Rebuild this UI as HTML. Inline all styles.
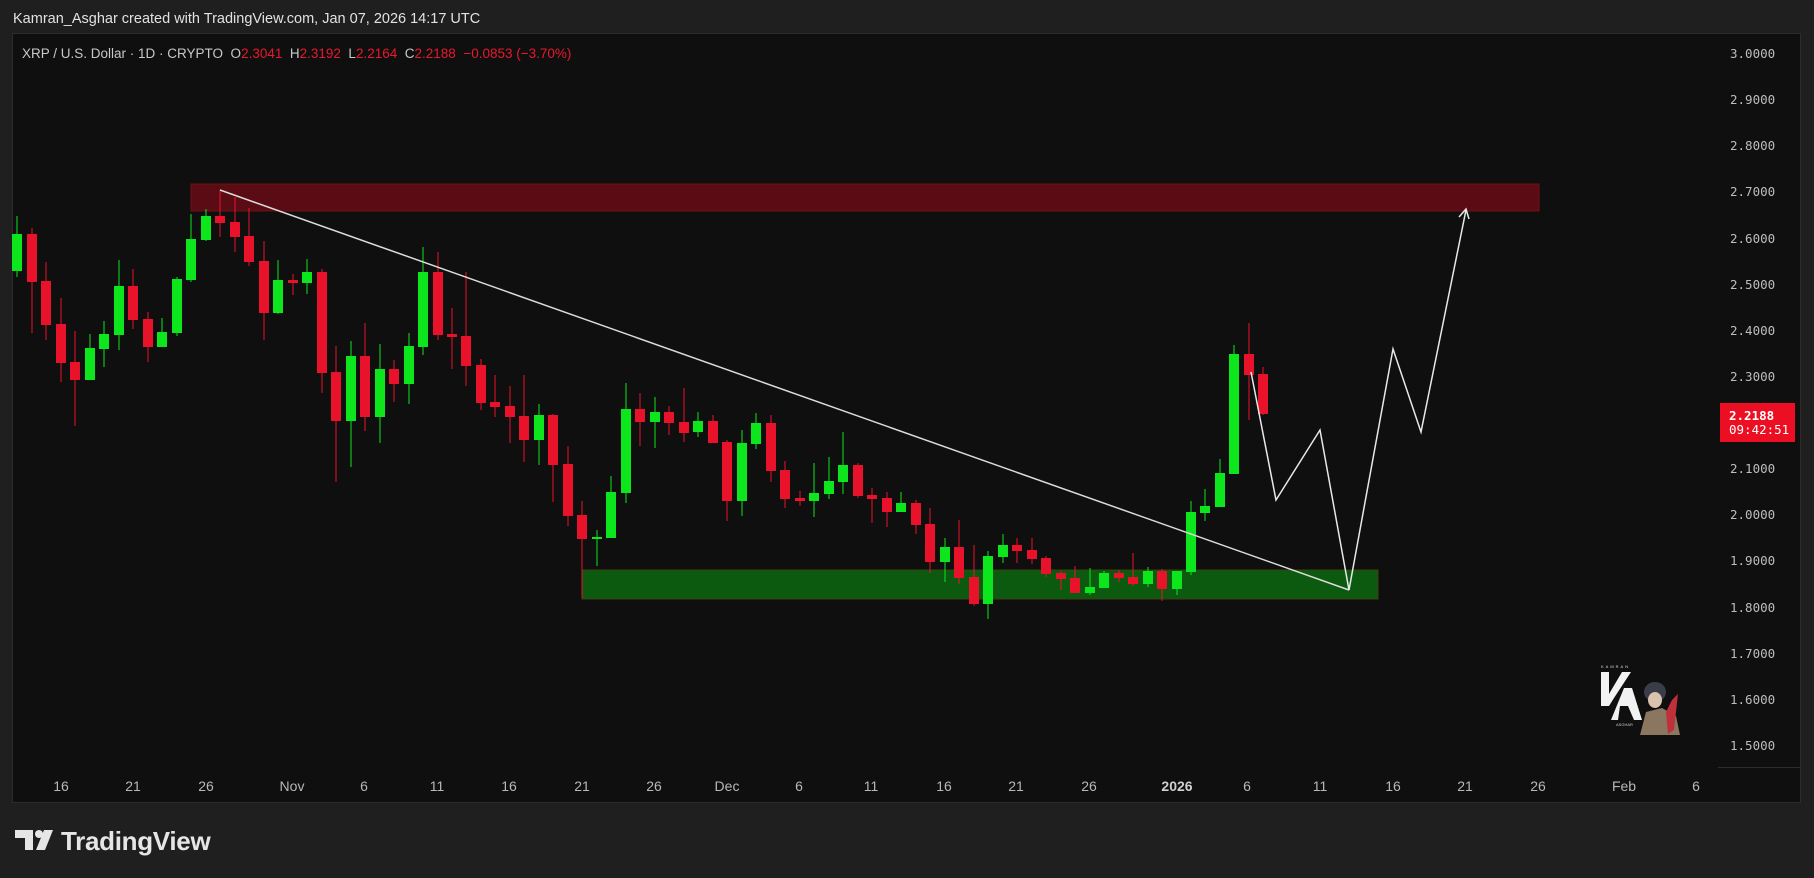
<!DOCTYPE html>
<html><head><meta charset="utf-8"><style>
html,body{margin:0;padding:0;background:#1f1f1f;width:1814px;height:878px;overflow:hidden;font-family:"Liberation Sans",sans-serif}
.hdr{position:absolute;left:13px;top:11px;font-size:14.5px;color:#e2e2e2;white-space:nowrap}
.panel{position:absolute;left:12px;top:33px;width:1787px;height:768px;background:#0f0f0f;border:1px solid #2c2c2c}
.leg{position:absolute;left:22px;top:46px;font-size:13.5px;color:#c8c8c8;white-space:pre}
.leg .r{color:#e8192e}
.pl{position:absolute;left:1730px;font-family:"DejaVu Sans Mono","Liberation Mono",monospace;font-size:12.5px;color:#bdbdbd}
.tl{position:absolute;top:778px;font-family:"Liberation Sans Narrow","Liberation Sans",sans-serif;font-size:14px;color:#b8b8b8;transform:translateX(-50%)}
.pb{position:absolute;left:1720px;top:403px;width:75px;height:39px;background:#ec0f24;font-family:"DejaVu Sans Mono","Liberation Mono",monospace;font-size:12.5px;color:#fff;line-height:14px;padding:6px 0 0 9px;box-sizing:border-box}
</style></head><body>
<div class="hdr">Kamran_Asghar created with TradingView.com, Jan 07, 2026 14:17 UTC</div>
<div class="panel"></div>
<div style="position:absolute;left:1718px;top:767px;width:82px;height:1px;background:#2c2c2c"></div>
<svg width="1814" height="878" style="position:absolute;left:0;top:0">
<rect x="191" y="184" width="1348" height="27" fill="#5b0b13" stroke="#6e1219" stroke-width="1"/>
<rect x="582" y="570" width="796" height="29" fill="#0c5a10" stroke="#3f4012" stroke-width="1"/>
<g id="c"></g>
<line x1="220" y1="190" x2="1349" y2="590" stroke="#dcdcdc" stroke-width="1.5"/>
<polyline points="1251,372 1276,500 1320,430 1349,590 1393,349 1421,432 1466,210" fill="none" stroke="#e8e8e8" stroke-width="1.5"/>
<polyline points="1459,217 1466,209 1469,219" fill="none" stroke="#e8e8e8" stroke-width="1.5"/>
<g>
<rect x="15" y="830" width="18" height="8" fill="#e6e6e6"/>
<rect x="25" y="830" width="8" height="20" fill="#e6e6e6"/>
<circle cx="39" cy="834" r="4" fill="#e6e6e6"/>
<polygon points="44,830 53,830 45,850 36,850" fill="#e6e6e6"/>
</g>
<text x="61" y="850" font-family="Liberation Sans" font-weight="bold" font-size="26" fill="#e6e6e6" letter-spacing="-0.3">TradingView</text>
<g>
<text x="1601" y="668" font-size="4" fill="#ddd" font-family="Liberation Sans" letter-spacing="2">KAMRAN</text>
<polygon points="1601,672 1609,672 1609,694 1622,672 1631,672 1614,698 1609,706 1601,706" fill="#f2f2f2"/>
<polygon points="1611,720 1624,688 1632,688 1642,720 1634,720 1628,706 1620,706 1618,720" fill="#f2f2f2"/>
<text x="1616" y="726" font-size="4" fill="#ccc" font-family="Liberation Sans">ASGHAR</text>
<ellipse cx="1655" cy="692" rx="11" ry="10" fill="#3a3d48"/>
<ellipse cx="1655" cy="700" rx="7" ry="8" fill="#d9c3ae"/>
<polygon points="1640,735 1646,712 1662,708 1676,716 1680,735" fill="#8b7760"/>
<polygon points="1666,712 1672,700 1678,694 1674,730 1668,734" fill="#c0303a"/>
</g>
</svg>
<div class="leg">XRP / U.S. Dollar · 1D · CRYPTO  O<span class="r">2.3041</span>  H<span class="r">2.3192</span>  L<span class="r">2.2164</span>  C<span class="r">2.2188</span>  <span class="r">−0.0853 (−3.70%)</span></div>
<div class="pl" style="top:46px">3.0000</div>
<div class="pl" style="top:92px">2.9000</div>
<div class="pl" style="top:138px">2.8000</div>
<div class="pl" style="top:184px">2.7000</div>
<div class="pl" style="top:231px">2.6000</div>
<div class="pl" style="top:277px">2.5000</div>
<div class="pl" style="top:323px">2.4000</div>
<div class="pl" style="top:369px">2.3000</div>
<div class="pl" style="top:461px">2.1000</div>
<div class="pl" style="top:507px">2.0000</div>
<div class="pl" style="top:553px">1.9000</div>
<div class="pl" style="top:600px">1.8000</div>
<div class="pl" style="top:646px">1.7000</div>
<div class="pl" style="top:692px">1.6000</div>
<div class="pl" style="top:738px">1.5000</div>
<div class="pb"><b>2.2188</b><br>09:42:51</div>
<div class="tl" style="left:61px">16</div>
<div class="tl" style="left:133px">21</div>
<div class="tl" style="left:206px">26</div>
<div class="tl" style="left:292px">Nov</div>
<div class="tl" style="left:364px">6</div>
<div class="tl" style="left:437px">11</div>
<div class="tl" style="left:509px">16</div>
<div class="tl" style="left:582px">21</div>
<div class="tl" style="left:654px">26</div>
<div class="tl" style="left:727px">Dec</div>
<div class="tl" style="left:799px">6</div>
<div class="tl" style="left:871px">11</div>
<div class="tl" style="left:944px">16</div>
<div class="tl" style="left:1016px">21</div>
<div class="tl" style="left:1089px">26</div>
<div class="tl" style="left:1177px;font-weight:bold;color:#d0d0d0">2026</div>
<div class="tl" style="left:1247px">6</div>
<div class="tl" style="left:1320px">11</div>
<div class="tl" style="left:1393px">16</div>
<div class="tl" style="left:1465px">21</div>
<div class="tl" style="left:1538px">26</div>
<div class="tl" style="left:1624px">Feb</div>
<div class="tl" style="left:1696px">6</div>
<script>
var d=[
"G 234 271 216 277","R 234 282 228 333","R 281 325 262 340","R 324 363 298 382","R 362 380 331 426",
"G 348 380 334 380","G 334 349 321 367","G 286 335 260 350","R 286 320 269 329","R 319 347 312 362",
"G 332 347 318 347","G 279 333 277 336","G 239 280 214 282","G 216 240 209 241","R 216 223 190 237",
"R 222 237 197 252","R 236 262 208 266","R 261 313 241 340","G 280 313 260 314","R 280 283 274 295",
"G 272 283 259 294","R 272 373 269 393","R 372 421 346 482","G 356 421 341 467","R 356 417 323 431",
"G 369 417 344 443","R 369 384 360 402","G 346 384 333 404","G 272 347 247 355","R 272 335 252 340",
"R 334 337 308 369","R 336 366 272 386","R 365 403 359 410","R 402 407 375 417","R 406 417 386 443",
"R 416 440 375 462","G 415 440 404 465","R 415 465 414 502","R 464 516 446 526","R 515 539 501 598",
"G 537 539 530 566","G 492 538 476 538","G 409 493 383 503","R 409 422 393 446","G 412 422 397 448",
"R 412 423 406 435","R 422 433 388 442","G 421 432 412 437","R 421 443 415 443","R 442 501 440 521",
"G 443 501 430 516","G 423 444 413 449","R 423 471 415 482","R 470 499 461 508","R 498 501 491 506",
"G 493 501 463 517","G 481 494 457 499","G 465 482 432 494","R 465 496 463 498","R 495 499 488 523",
"R 498 512 492 527","G 503 512 492 512","R 503 525 500 534","R 524 562 508 573","G 547 562 538 582",
"R 547 578 520 584","R 577 604 545 606","G 556 604 551 619","G 545 557 534 563","R 545 551 538 563",
"R 550 559 538 564","R 558 574 556 577","R 573 579 571 590","R 578 593 566 593","G 587 593 568 595",
"G 573 588 571 588","R 573 578 570 582","R 577 584 553 586","G 571 584 567 587","R 571 589 569 601",
"G 571 589 571 595","G 512 572 501 575","G 506 513 489 521","G 473 507 459 507","G 354 474 345 474",
"R 354 375 323 420","R 374 414 367 415"];
var s="";
for(var i=0;i<d.length;i++){var a=d[i].split(" ");var c=a[0]=="G"?"#0de61c":"#e8132b";var x=17.3+14.49*i;
var bt=+a[1],bb=+a[2],wt=+a[3],wb=+a[4];if(bb-bt<2)bb=bt+2;
s+='<rect x="'+(Math.round(x)-0.5)+'" y="'+wt+'" width="1" height="'+(wb-wt)+'" fill="'+c+'"/>';
s+='<rect x="'+(Math.round(x)-5)+'" y="'+bt+'" width="10" height="'+(bb-bt)+'" fill="'+c+'"/>';}
document.getElementById("c").innerHTML=s;
</script>
</body></html>
